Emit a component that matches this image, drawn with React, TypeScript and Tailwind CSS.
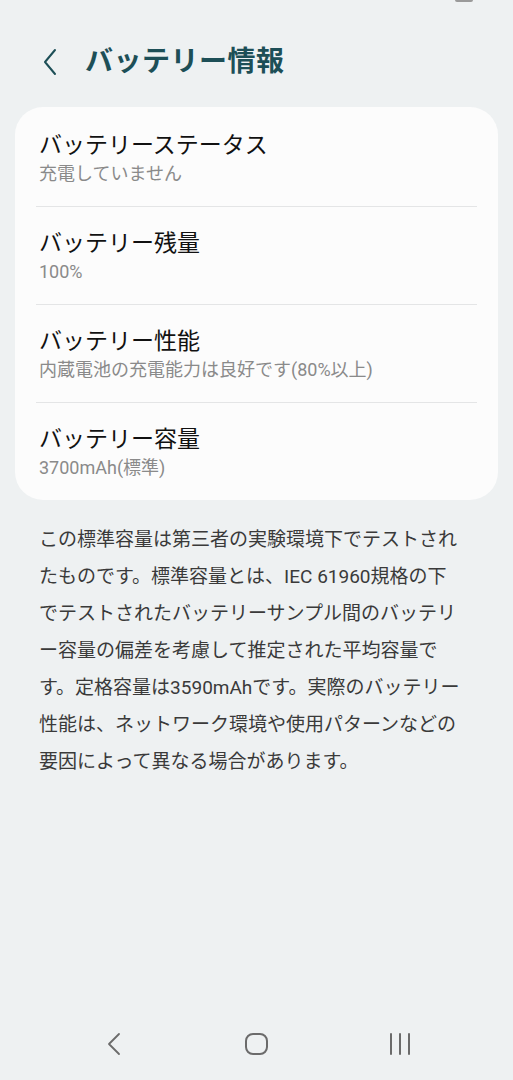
const rows = [
  { title: 'バッテリーステータス', value: '充電していません' },
  { title: 'バッテリー残量', value: '100%' },
  { title: 'バッテリー性能', value: '内蔵電池の充電能力は良好です(80%以上)' },
  { title: 'バッテリー容量', value: '3700mAh(標準)' },
];

const notes = [
  'この標準容量は第三者の実験環境下でテストされ',
  'たものです。標準容量とは、IEC 61960規格の下',
  'でテストされたバッテリーサンプル間のバッテリ',
  'ー容量の偏差を考慮して推定された平均容量で',
  'す。定格容量は3590mAhです。実際のバッテリー',
  '性能は、ネットワーク環境や使用パターンなどの',
  '要因によって異なる場合があります。',
];

export default function App() {
  return (
    <div
      className="min-h-screen w-full bg-[#eef1f2] flex flex-col"
      style={{ fontFamily: 'Roboto, "Noto Sans CJK JP", sans-serif' }}
    >
      {/* status bar remnant */}
      <div className="h-[3px] flex justify-end pr-[40px]">
        <div className="w-[18px] h-[2px] bg-[#9a9a9a] rounded-b-sm" />
      </div>

      {/* Header */}
      <div className="mt-[31px] h-[56px] flex items-center">
        <button className="ml-[41px] w-[18px] h-[28px] flex items-center justify-center text-[#1d4f57]">
          <svg width="16" height="28" viewBox="0 0 16 28" fill="none" stroke="currentColor" strokeWidth="2" strokeLinecap="round" strokeLinejoin="round">
            <polyline points="13 2 3 14 13 26" />
          </svg>
        </button>
        <h1 className="ml-[26px] text-[28px] font-bold tracking-[0.5px] text-[#1d4f57] leading-none">
          バッテリー情報
        </h1>
      </div>

      {/* Card */}
      <div className="mt-[17px] mx-[15px] bg-[#fcfcfc] rounded-[28px] px-[21px]">
        {rows.map((row, i) => (
          <div
            key={row.title}
            className={
              (i === 0 ? 'pt-[25px] ' : 'pt-[23px] ') +
              'pb-[21px] pl-[3px] ' +
              (i < rows.length - 1 ? 'border-b border-[#e4e5e6]' : '')
            }
          >
            <div className="text-[23px] leading-[28px] text-[#111111]">{row.title}</div>
            <div className="mt-[3px] text-[18px] leading-[22px] text-[#8a8a8a]">{row.value}</div>
          </div>
        ))}
      </div>

      {/* Notes */}
      <div className="mt-[21px] ml-[39px] text-[19px] leading-[37px] text-[#3a3a3a]">
        {notes.map((line) => (
          <div key={line} className="whitespace-nowrap">
            {line}
          </div>
        ))}
      </div>

      {/* Navigation bar */}
      <div className="mt-auto mb-[12px] h-[48px] flex items-center justify-around px-[42px] text-[#6b6b6b]">
        <div className="w-[60px] flex justify-center">
          <svg width="14" height="24" viewBox="0 0 14 24" fill="none" stroke="currentColor" strokeWidth="1.8" strokeLinecap="round" strokeLinejoin="round">
            <polyline points="12 2 2 12 12 22" />
          </svg>
        </div>
        <div className="w-[60px] flex justify-center">
          <div className="w-[23px] h-[22px] border-[2px] border-[#6b6b6b] rounded-[8px]" />
        </div>
        <div className="w-[60px] flex justify-center">
          <svg width="24" height="24" viewBox="0 0 24 24" fill="none" stroke="currentColor" strokeWidth="2" strokeLinecap="round">
            <line x1="3" y1="2" x2="3" y2="22" />
            <line x1="12" y1="2" x2="12" y2="22" />
            <line x1="21" y1="2" x2="21" y2="22" />
          </svg>
        </div>
      </div>
    </div>
  );
}
